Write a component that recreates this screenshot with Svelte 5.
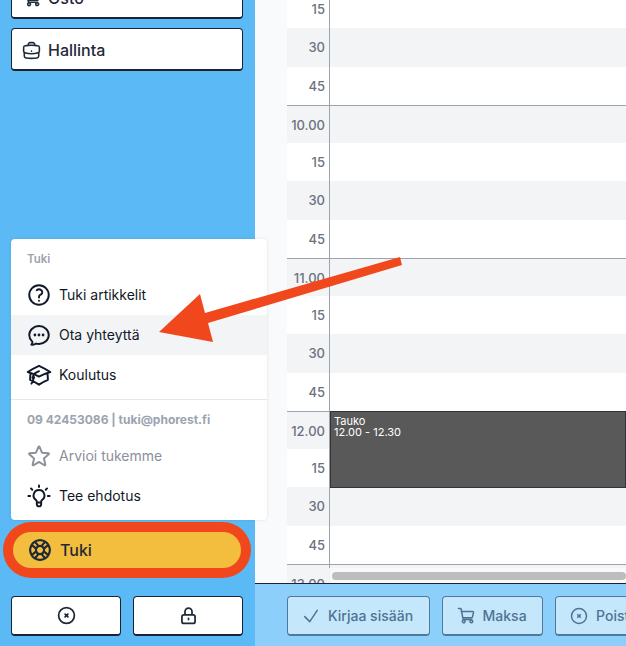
<script>
	const icons = {
		briefcase: 'M20.25 14.15v4.25c0 1.094-.787 2.036-1.872 2.18-2.087.277-4.216.42-6.378.42s-4.291-.143-6.378-.42c-1.085-.144-1.872-1.086-1.872-2.18v-4.25m16.5 0a2.18 2.18 0 0 0 .75-1.661V8.706c0-1.081-.768-2.015-1.837-2.175a48.114 48.114 0 0 0-3.413-.387m4.5 8.006c-.194.165-.42.295-.673.38A23.978 23.978 0 0 1 12 15.75c-2.648 0-5.195-.429-7.577-1.22a2.016 2.016 0 0 1-.673-.38m0 0A2.18 2.18 0 0 1 3 12.489V8.706c0-1.081.768-2.015 1.837-2.175a48.111 48.111 0 0 1 3.413-.387m7.5 0V5.25A2.25 2.25 0 0 0 13.5 3h-3a2.25 2.25 0 0 0-2.25 2.25v.894m7.5 0a48.667 48.667 0 0 0-7.5 0M12 12.75h.008v.008H12v-.008Z',
		cart: 'M3 3h2.2c.5 0 .9.3 1 .8L8.4 15.5c.1.5.5.8 1 .8H19M6.3 6.5H20c.7 0 1.1.6 1 1.2l-1.3 5.6c-.1.5-.5.8-1 .8H8M8 17.5a1.6 1.6 0 1 0 2.5 2 1.6 1.6 0 0 0-2.5-2Zm9.2 0a1.6 1.6 0 1 0 2.5 2 1.6 1.6 0 0 0-2.5-2Z',
		question: 'M9.879 7.519c1.171-1.025 3.071-1.025 4.242 0 1.172 1.025 1.172 2.687 0 3.712-.203.179-.43.326-.67.442-.745.361-1.45.999-1.45 1.827v.75M21 12a9 9 0 1 1-18 0 9 9 0 0 1 18 0Zm-9 5.25h.008v.008H12v-.008Z',
		chat: 'M8.625 12a.375.375 0 1 1-.75 0 .375.375 0 0 1 .75 0Zm0 0H8.25m4.125 0a.375.375 0 1 1-.75 0 .375.375 0 0 1 .75 0Zm0 0H12m4.125 0a.375.375 0 1 1-.75 0 .375.375 0 0 1 .75 0Zm0 0h-.375M21 12c0 4.556-4.03 8.25-9 8.25a9.764 9.764 0 0 1-2.555-.337A5.972 5.972 0 0 1 5.41 20.97a5.969 5.969 0 0 1-.474-.065 4.48 4.48 0 0 0 .978-2.025c.09-.457-.133-.901-.467-1.226C3.93 16.178 3 14.189 3 12c0-4.556 4.03-8.25 9-8.25s9 3.694 9 8.25Z',
		cap: 'M4.26 10.147a60.438 60.438 0 0 0-.491 6.347A48.62 48.62 0 0 1 12 20.904a48.62 48.62 0 0 1 8.232-4.41 60.46 60.46 0 0 0-.491-6.347m-15.482 0a50.636 50.636 0 0 0-2.658-.813A59.906 59.906 0 0 1 12 3.493a59.903 59.903 0 0 1 10.399 5.84c-.896.248-1.783.52-2.658.814m-15.482 0A50.717 50.717 0 0 1 12 13.489a50.702 50.702 0 0 1 7.74-3.342M6.75 15a.75.75 0 1 0 0-1.5.75.75 0 0 0 0 1.5Zm0 0v-3.675A55.378 55.378 0 0 1 12 8.443m-7.007 11.55A5.981 5.981 0 0 0 6.75 15.75v-1.5',
		star: 'M11.48 3.499a.562.562 0 0 1 1.04 0l2.125 5.111a.563.563 0 0 0 .475.345l5.518.442c.499.04.701.663.321.988l-4.204 3.602a.563.563 0 0 0-.182.557l1.285 5.385a.562.562 0 0 1-.84.61l-4.725-2.885a.562.562 0 0 0-.586 0L6.982 20.54a.562.562 0 0 1-.84-.61l1.285-5.386a.562.562 0 0 0-.182-.557l-4.204-3.602a.562.562 0 0 1 .321-.988l5.518-.442a.563.563 0 0 0 .475-.345L11.48 3.5Z',
		bulb: 'M12 2.2v1.6M4.6 5l1.2 1.2M19.4 5l-1.2 1.2M2.2 12h1.6M20.2 12h1.6M12 6.5a5 5 0 0 0-3 9c.6.5 1 1.1 1 1.9v.6h4v-.6c0-.8.4-1.4 1-1.9a5 5 0 0 0-3-9ZM10 18v1.5a2 2 0 0 0 4 0V18',
		buoy: 'M16.712 4.33a9.027 9.027 0 0 1 1.652 1.306c.51.51.944 1.064 1.306 1.652M16.712 4.33l-3.448 4.138m3.448-4.138a9.014 9.014 0 0 0-9.424 0M19.67 7.288l-4.138 3.448m4.138-3.448a9.014 9.014 0 0 1 0 9.424m-4.138-5.976a3.736 3.736 0 0 0-.88-1.388 3.737 3.737 0 0 0-1.388-.88m2.268 2.268a3.765 3.765 0 0 1 0 2.528m-2.268-4.796a3.765 3.765 0 0 0-2.528 0m4.796 4.796c-.181.506-.475.982-.88 1.388a3.736 3.736 0 0 1-1.388.88m2.268-2.268 4.138 3.448m0 0a9.027 9.027 0 0 1-1.306 1.652c-.51.51-1.064.944-1.652 1.306m0 0-3.448-4.138m3.448 4.138a9.014 9.014 0 0 1-9.424 0m5.976-4.138a3.765 3.765 0 0 1-2.528 0m0 0a3.736 3.736 0 0 1-1.388-.88 3.737 3.737 0 0 1-.88-1.388m2.268 2.268L7.288 19.67m0 0a9.024 9.024 0 0 1-1.652-1.306 9.027 9.027 0 0 1-1.306-1.652m0 0 4.138-3.448M4.33 16.712a9.014 9.014 0 0 1 0-9.424m4.138 5.976a3.765 3.765 0 0 1 0-2.528m0 0c.181-.506.475-.982.88-1.388a3.736 3.736 0 0 1 1.388-.88m-2.268 2.268L4.33 7.288m6.406 1.18L7.288 4.33m0 0a9.024 9.024 0 0 0-1.652 1.306A9.025 9.025 0 0 0 4.33 7.288',
		xcircle: 'M10.4 10.4l3.2 3.2m0-3.2-3.2 3.2M21 12a9 9 0 1 1-18 0 9 9 0 0 1 18 0Z',
		lock: 'M16 10.5V7.5a4 4 0 1 0-8 0v3m-1.25 10.5h10.5a2.25 2.25 0 0 0 2.25-2.25v-5.25a2.25 2.25 0 0 0-2.25-2.25H6.75a2.25 2.25 0 0 0-2.25 2.25v5.25A2.25 2.25 0 0 0 6.75 21ZM12 15.2v1.3',
		check: 'm4.5 12.75 6 6 9-13.5'
	};

	const rows = [
		'15', '30', '45',
		'10.00', '15', '30', '45',
		'11.00', '15', '30', '45',
		'12.00', '15', '30', '45',
		'13.00'
	];
</script>

<div class="page">
	<aside class="sidebar">
		<button class="nav nav-cut">
			<svg class="ic" viewBox="0 0 24 24"><path d={icons.cart} /></svg>
			Osto
		</button>
		<button class="nav">
			<svg class="ic" viewBox="0 0 24 24"><path d={icons.briefcase} /></svg>
			Hallinta
		</button>

		<div class="bottom">
			<div class="ring">
				<button class="tuki">
					<svg class="ic" viewBox="0 0 24 24"><path d={icons.buoy} /></svg>
					Tuki
				</button>
			</div>
			<div class="pair">
				<button class="square"><svg class="ic small" viewBox="0 0 24 24"><path d={icons.xcircle} /></svg></button>
				<button class="square"><svg class="ic small" viewBox="0 0 24 24"><path d={icons.lock} /></svg></button>
			</div>
		</div>
	</aside>

	<main class="main">
		<div class="calendar">
			<div class="rows">
				{#each rows as label, i}
					<div class="row" class:hour={label.includes('.')} class:odd={i % 2 === 1}>
						<span class="time">{label}</span>
						<span class="cell"></span>
					</div>
				{/each}
				<div class="event">Tauko<br />12.00 - 12.30</div>
			</div>
			<div class="scrollbar"><span></span></div>
		</div>
		<footer class="actions">
			<button class="act">
				<svg class="ic act-ic" viewBox="0 0 24 24"><path d={icons.check} /></svg>
				Kirjaa sisään
			</button>
			<button class="act">
				<svg class="ic act-ic" viewBox="0 0 24 24"><path d={icons.cart} /></svg>
				Maksa
			</button>
			<button class="act">
				<svg class="ic act-ic" viewBox="0 0 24 24"><path d={icons.xcircle} /></svg>
				Poista
			</button>
		</footer>
	</main>

	<div class="popup">
		<div class="head">Tuki</div>
		<div class="item"><svg class="ic" viewBox="0 0 24 24"><path d={icons.question} /></svg>Tuki artikkelit</div>
		<div class="item active"><svg class="ic" viewBox="0 0 24 24"><path d={icons.chat} /></svg>Ota yhteyttä</div>
		<div class="item"><svg class="ic" viewBox="0 0 24 24"><path d={icons.cap} /></svg>Koulutus</div>
		<div class="sep"></div>
		<div class="head contact">09 42453086 | tuki@phorest.fi</div>
		<div class="item muted"><svg class="ic" viewBox="0 0 24 24"><path d={icons.star} /></svg>Arvioi tukemme</div>
		<div class="item"><svg class="ic" viewBox="0 0 24 24"><path d={icons.bulb} /></svg>Tee ehdotus</div>
	</div>

	<svg class="arrow" viewBox="0 0 626 646">
		<polygon points="400,257 402,265 208,323 213,342 159,332 200,294 205,313" />
	</svg>
</div>

<style>
	:global(body) {
		margin: 0;
	}

	.page {
		position: relative;
		display: flex;
		width: 626px;
		height: 646px;
		overflow: hidden;
		background: #f9fafb;
		font-family: Inter, "Liberation Sans", sans-serif;
		color: #1f2937;
	}

	button {
		font-family: inherit;
		cursor: pointer;
	}

	.ic {
		width: 24px;
		height: 24px;
		flex: none;
		fill: none;
		stroke: currentColor;
		stroke-width: 1.8;
		stroke-linecap: round;
		stroke-linejoin: round;
	}

	.sidebar {
		display: flex;
		flex-direction: column;
		flex: none;
		box-sizing: border-box;
		width: 255px;
		padding: 0 12px 10px 11px;
		background: #5bbaf6;
	}

	.nav {
		display: flex;
		align-items: center;
		gap: 6px;
		height: 43px;
		margin-bottom: 9px;
		padding: 2px 9px 0;
		background: #fff;
		border: 1px solid #1a2233;
		border-bottom-width: 2px;
		border-radius: 4px;
		font-size: 16px;
		font-weight: 500;
		color: #1f2937;
	}

	.nav .ic {
		width: 21px;
		height: 21px;
	}

	.nav-cut {
		margin-top: -24px;
	}

	.bottom {
		margin-top: auto;
	}

	.ring {
		margin: 0 -8px 18px -8px;
		padding: 10px;
		background: #f1471d;
		border-radius: 28px;
	}

	.tuki {
		display: flex;
		align-items: center;
		gap: 7px;
		box-sizing: border-box;
		width: 100%;
		height: 36px;
		padding: 0 14px;
		background: #f3be3e;
		border: 0;
		border-radius: 18px;
		font-size: 16px;
		font-weight: 500;
		color: #1f2937;
	}

	.tuki .ic {
		width: 26px;
		height: 26px;
		stroke-width: 2;
	}

	.pair {
		display: flex;
		gap: 12px;
	}

	.square {
		display: flex;
		align-items: center;
		justify-content: center;
		flex: 1;
		height: 40px;
		padding: 0;
		background: #fff;
		border: 1px solid #1a2233;
		border-bottom-width: 2px;
		border-radius: 4px;
		color: #1f2937;
	}

	.small {
		width: 21px;
		height: 21px;
		stroke-width: 2;
	}

	.main {
		display: flex;
		flex-direction: column;
		flex: 1;
		min-width: 0;
	}

	.calendar {
		position: relative;
		flex: none;
		height: 583px;
		padding-left: 32px;
		overflow: hidden;
		border-bottom: 1px solid #1a2233;
		box-sizing: content-box;
	}

	.rows {
		position: relative;
		margin-top: -10px;
		background: #fff;
	}

	.row {
		display: flex;
		box-sizing: border-box;
		height: 38.25px;
	}

	.row.odd {
		background: #f3f4f6;
	}

	.row.hour {
		border-top: 1px solid #9ca3af;
	}

	.time {
		box-sizing: border-box;
		flex: none;
		width: 43px;
		padding: 12px 4px 0 0;
		border-right: 1px solid #9ca3af;
		text-align: right;
		font-size: 13px;
		font-weight: 500;
		line-height: 14px;
		color: #6b7280;
	}

	.hour .time {
		padding-top: 12px;
	}

	.cell {
		flex: 1;
	}

	.event {
		position: absolute;
		left: 43px;
		right: 0;
		top: 421px;
		box-sizing: border-box;
		height: 77px;
		padding: 4px 3px;
		background: #595959;
		border: 1px solid #333;
		font-size: 11px;
		line-height: 11px;
		color: #fff;
	}

	.scrollbar {
		position: absolute;
		left: 74px;
		right: 0;
		bottom: 0;
		height: 15px;
		background: rgba(249, 250, 251, 0.9);
		padding-left: 3px;
		box-sizing: border-box;
	}

	.scrollbar span {
		display: block;
		height: 8px;
		margin-top: 4px;
		background: #bdbdbd;
		border-radius: 4px;
	}

	.actions {
		display: flex;
		gap: 12px;
		flex: 1;
		padding: 12px 0 0 32px;
		background: #8ccffb;
	}

	.act {
		display: flex;
		align-items: center;
		flex: none;
		gap: 7px;
		height: 40px;
		padding: 0 15.5px 0 13px;
		background: #c5e7fc;
		border: 1px solid #4f7a9c;
		border-bottom-width: 2px;
		border-radius: 4px;
		font-size: 14px;
		font-weight: 500;
		color: #4f7391;
		white-space: nowrap;
	}

	.act-ic {
		width: 20px;
		height: 20px;
	}

	.popup {
		position: absolute;
		left: 11px;
		top: 239px;
		box-sizing: border-box;
		width: 256px;
		height: 281px;
		padding-top: 11px;
		background: #fff;
		border-radius: 4px;
		box-shadow: 0 0 3px rgba(0, 0, 0, 0.12);
	}

	.head {
		height: 24px;
		padding-top: 1px;
		padding-left: 16px;
		font-size: 11.5px;
		font-weight: 600;
		line-height: 16px;
		color: #9ca3af;
	}

	.contact {
		height: 24px;
		padding-top: 12px;
		font-size: 12px;
		font-weight: 700;
	}

	.item {
		display: flex;
		align-items: center;
		gap: 7px;
		box-sizing: border-box;
		height: 40px;
		padding: 0 0 1px 15px;
		font-size: 14px;
		font-weight: 400;
		color: #111827;
	}

	.item .ic {
		width: 26px;
		height: 26px;
	}

	.item.active {
		background: #f3f4f6;
	}

	.item.muted {
		color: #8b909a;
	}

	.sep {
		height: 1px;
		margin-top: 4px;
		background: #e5e7eb;
	}

	.arrow {
		position: absolute;
		left: 0;
		top: 0;
		width: 626px;
		height: 646px;
		pointer-events: none;
	}

	.arrow polygon {
		fill: #f1471d;
	}
</style>
